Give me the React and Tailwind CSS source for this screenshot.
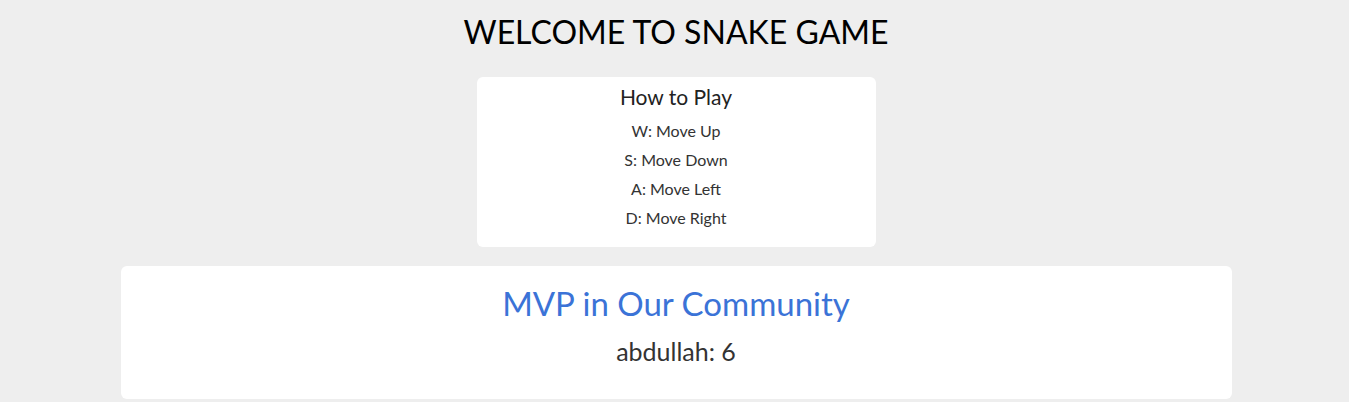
import React from 'react';

const controls = [
  { key: 'W', label: 'Move Up' },
  { key: 'S', label: 'Move Down' },
  { key: 'A', label: 'Move Left' },
  { key: 'D', label: 'Move Right' },
];

function App() {
  return (
    <div className="min-h-screen bg-[#eeeeee] pl-[3px] font-['Lato','Open_Sans',sans-serif] text-center">
      {/* Header */}
      <h1 className="pt-[13px] text-[32px] leading-[38px] text-black">WELCOME TO SNAKE GAME</h1>

      {/* Instructions */}
      <div className="mx-auto mt-[26px] w-[399px] rounded-md bg-white pt-[6px] pb-[15px]">
        <h2 className="text-[21px] leading-[28px] text-[#222]">How to Play</h2>
        <ul className="mt-[5px] text-[16px] text-[#333]">
          {controls.map((c) => (
            <li key={c.key} className="leading-[29px]">
              {c.key}: {c.label}
            </li>
          ))}
        </ul>
      </div>

      {/* Leaderboard */}
      <div className="mx-auto mt-[19px] w-[1111px] rounded-md bg-white pt-[17px] pb-[32px]">
        <h2 className="text-[33px] leading-[40px] text-[#3b73d7]">MVP in Our Community</h2>
        <p className="mt-[12px] text-[25px] leading-[32px] text-[#333]">abdullah: 6</p>
      </div>
    </div>
  );
}

export default App;
